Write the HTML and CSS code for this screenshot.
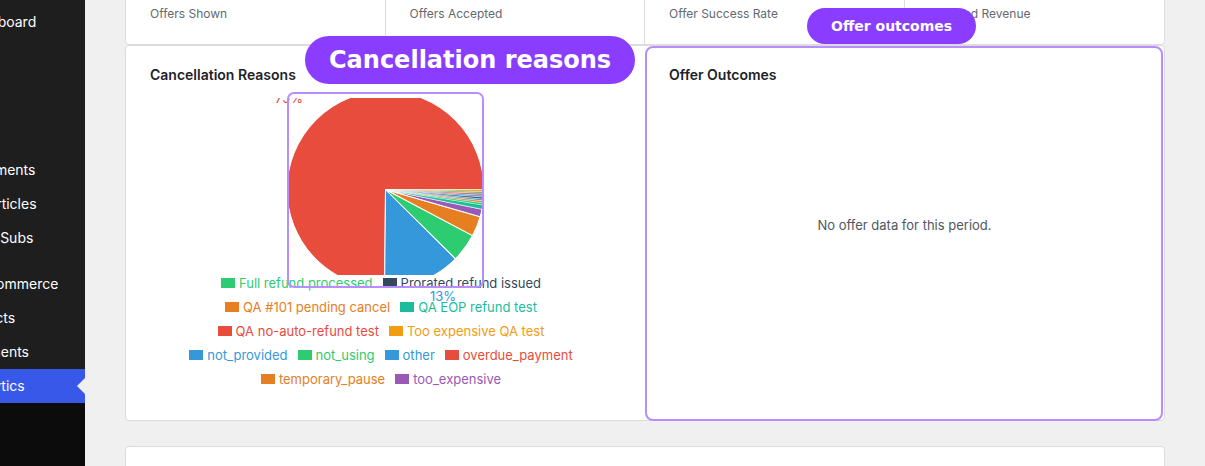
FILE: index.html
```html
<!DOCTYPE html>
<html lang="en">
<head>
  <meta charset="UTF-8" />
  <meta name="viewport" content="width=device-width, initial-scale=1.0"/>
  <title>Retention Analytics</title>
  <link rel="stylesheet" href="styles.css">
</head>
<body>
  <div class="admin">
    <nav class="sidebar">
      <ul class="menu">
        <li>Dashboard</li>
        <li class="sep"></li>
        <li>Pods</li>
        <li>Links</li>
        <li>Tools</li>
        <li>Comments</li>
        <li>KB Articles</li>
        <li>Meal Subs</li>
        <li class="sep"></li>
        <li class="shop">WooCommerce</li>
        <li class="shop">Products</li>
        <li>Payments</li>
        <li class="current">Analytics</li>
      </ul>
    </nav>

    <main class="main">
      <section class="stats">
        <div class="stat">
          <div class="stat-value">0</div>
          <div class="stat-label">Offers Shown</div>
        </div>
        <div class="stat">
          <div class="stat-value">0</div>
          <div class="stat-label">Offers Accepted</div>
        </div>
        <div class="stat">
          <div class="stat-value">0%</div>
          <div class="stat-label">Offer Success Rate</div>
        </div>
        <div class="stat">
          <div class="stat-value">$0.00</div>
          <div class="stat-label">Retained Revenue</div>
        </div>
      </section>

      <section class="charts">
        <div class="panel">
          <h3 class="panel-title">Cancellation Reasons</h3>
          <div class="pie-area">
            <div class="pie-clip">
              <svg class="pie" viewBox="-98 -98 196 196">
                <g stroke="#fff" stroke-width="1" stroke-linejoin="round">
                  <path fill="#e74c3c" d="M0 0 L-0.86 98 A98 98 0 1 1 98 0 Z"/>
                  <path fill="#3498db" d="M0 0 L69.66 68.93 A98 98 0 0 1 -0.86 98 Z"/>
                  <path fill="#2ecc71" d="M0 0 L86.61 45.86 A98 98 0 0 1 69.66 68.93 Z"/>
                  <path fill="#e67e22" d="M0 0 L94.2 27.01 A98 98 0 0 1 86.61 45.86 Z"/>
                  <path fill="#9b59b6" d="M0 0 L96.03 19.54 A98 98 0 0 1 94.2 27.01 Z"/>
                </g>
                <!-- the small slices get a thinner separator so their colour still shows -->
                <g stroke="#fff" stroke-width="0.4" stroke-linejoin="round">
                  <path fill="#1abc9c" d="M0 0 L96.79 15.33 A98 98 0 0 1 96.03 19.54 Z"/>
                  <path fill="#2ecc71" d="M0 0 L97.12 13.13 A98 98 0 0 1 96.79 15.33 Z"/>
                  <path fill="#e67e22" d="M0 0 L97.35 11.26 A98 98 0 0 1 97.12 13.13 Z"/>
                  <path fill="#3498db" d="M0 0 L97.55 9.39 A98 98 0 0 1 97.35 11.26 Z"/>
                  <path fill="#34495e" d="M0 0 L97.71 7.52 A98 98 0 0 1 97.55 9.39 Z"/>
                  <path fill="#3498db" d="M0 0 L97.84 5.64 A98 98 0 0 1 97.71 7.52 Z"/>
                  <path fill="#e74c3c" d="M0 0 L97.93 3.76 A98 98 0 0 1 97.84 5.64 Z"/>
                  <path fill="#1abc9c" d="M0 0 L97.98 1.88 A98 98 0 0 1 97.93 3.76 Z"/>
                  <path fill="#f39c12" d="M0 0 L98 0 A98 98 0 0 1 97.98 1.88 Z"/>
                </g>
              </svg>
              <span class="pie-label pct-big">75%</span>
            </div>

            <div class="legend">
              <div class="legend-row">
                <span class="legend-item c-green"><i class="swatch"></i>Full refund processed</span>
                <span class="legend-item c-navy"><i class="swatch"></i>Prorated refund issued</span>
              </div>
              <div class="legend-row">
                <span class="legend-item c-orange"><i class="swatch"></i>QA #101 pending cancel</span>
                <span class="legend-item c-teal"><i class="swatch"></i>QA EOP refund test</span>
              </div>
              <div class="legend-row">
                <span class="legend-item c-red"><i class="swatch"></i>QA no-auto-refund test</span>
                <span class="legend-item c-amber"><i class="swatch"></i>Too expensive QA test</span>
              </div>
              <div class="legend-row">
                <span class="legend-item c-blue"><i class="swatch"></i>not_provided</span>
                <span class="legend-item c-green"><i class="swatch"></i>not_using</span>
                <span class="legend-item c-blue"><i class="swatch"></i>other</span>
                <span class="legend-item c-red"><i class="swatch"></i>overdue_payment</span>
              </div>
              <div class="legend-row">
                <span class="legend-item c-orange"><i class="swatch"></i>temporary_pause</span>
                <span class="legend-item c-purple"><i class="swatch"></i>too_expensive</span>
              </div>
            </div>

            <span class="pie-label pct-small">13%</span>
            <div class="pie-frame"></div>
          </div>
        </div>

        <div class="panel">
          <h3 class="panel-title">Offer Outcomes</h3>
          <div class="empty">No offer data for this period.</div>
          <div class="panel-focus"></div>
        </div>

        <span class="tag tag-reasons">Cancellation reasons</span>
        <span class="tag tag-outcomes">Offer outcomes</span>
      </section>

      <section class="card-next"></section>
    </main>
  </div>
</body>
</html>
```

FILE: styles.css
```css
body {
  margin: 0;
  height: 466px;
  overflow: hidden;
  background: #f0f0f0;
  font-family: Inter, 'Liberation Sans', sans-serif;
  color: #1d2327;
}

.admin {
  display: flex;
  min-height: 100vh;
}

/* left admin menu, scrolled so the labels run off the edge */
.sidebar {
  width: 85px;
  flex-shrink: 0;
  background: #0c0c0c;
  overflow: hidden;
}

.menu {
  list-style: none;
  margin: 0;
  padding: 5px 0 0;
  background: #1e1e1e;
}

.menu li {
  position: relative;
  height: 34px;
  line-height: 34px;
  font-size: 14px;
  color: #fff;
  white-space: nowrap;
  text-indent: -36px;
}

.menu .shop { text-indent: -44px; }

.menu .sep { height: 12px; }

.menu .current { background: #3858e9; }

.menu .current::after {
  content: "";
  position: absolute;
  right: 0;
  top: 50%;
  margin-top: -8px;
  border: 8px solid transparent;
  border-right-color: #f0f0f0;
}

.main {
  flex: 1;
  padding: 0 40px;
}

/* summary numbers */
.stats {
  margin-top: -51px;
  display: grid;
  grid-template-columns: repeat(4, 1fr);
  background: #fff;
  border: 1px solid #dcdcde;
  border-radius: 4px;
}

.stat {
  padding: 20px 24px 22px;
  border-right: 1px solid #dcdcde;
}

.stat:last-child { border-right: none; }

.stat-value {
  font-size: 24px;
  line-height: 32px;
  font-weight: 600;
}

.stat-label {
  margin-top: 4px;
  font-size: 12px;
  line-height: 16px;
  color: #646970;
}

/* chart row */
.charts {
  position: relative;
  display: grid;
  grid-template-columns: 1fr 1fr;
  background: #fff;
  border: 1px solid #dcdcde;
  border-radius: 4px;
}

.panel {
  position: relative;
  padding: 20px 24px 33px;
}

.panel-title {
  margin: 0;
  font-size: 14px;
  line-height: 18px;
  font-weight: 600;
  color: #1d2327;
}

.pie-area {
  position: relative;
  margin-top: 14px;
}

.pie-clip {
  position: relative;
  height: 177px;
  overflow: hidden;
}

.pie {
  display: block;
  width: 197px;
  height: 197px;
  margin: -7px auto 0;
}

.pie-label {
  position: absolute;
  font-size: 13px;
  line-height: 16px;
}

.pct-big { left: 125px; top: -8px; color: #e74c3c; }
.pct-small { left: 280px; top: 190px; color: #3498db; }

.legend {
  display: flex;
  flex-direction: column;
  gap: 8px;
  padding-right: 9px;
}

.legend-row {
  display: flex;
  justify-content: center;
  gap: 10px;
  height: 16px;
  line-height: 16px;
  font-size: 13px;
  white-space: nowrap;
}

.legend-item {
  display: flex;
  align-items: center;
  gap: 4px;
}

.swatch {
  width: 14px;
  height: 10px;
  background: currentColor;
}

.c-green { color: #2ecc71; }
.c-navy { color: #34495e; }
.c-orange { color: #e67e22; }
.c-teal { color: #1abc9c; }
.c-red { color: #e74c3c; }
.c-amber { color: #f39c12; }
.c-blue { color: #3498db; }
.c-purple { color: #9b59b6; }

.pie-frame {
  position: absolute;
  left: 137px;
  top: -6px;
  width: 197px;
  height: 196px;
  box-sizing: border-box;
  border: 2px solid #b98cff;
  border-radius: 7px;
}

.empty {
  height: 254px;
  margin-top: 14px;
  display: flex;
  align-items: center;
  justify-content: center;
  font-size: 13px;
  color: #50575e;
}

.panel-focus {
  position: absolute;
  top: 0;
  left: 0;
  right: 1px;
  bottom: -1px;
  border: 2px solid #b98cff;
  border-radius: 8px;
}

.tag {
  position: absolute;
  padding: 0 24px;
  border-radius: 999px;
  background: #8b3dff;
  color: #fff;
  font-family: 'DejaVu Sans', sans-serif;
  font-weight: bold;
  white-space: nowrap;
}

.tag-reasons {
  left: 179px;
  top: -10px;
  height: 48px;
  line-height: 49px;
  font-size: 24px;
}

.tag-outcomes {
  left: 681px;
  top: -38px;
  height: 36px;
  line-height: 36px;
  font-size: 14px;
}

.card-next {
  margin-top: 25px;
  height: 200px;
  background: #fff;
  border: 1px solid #dcdcde;
  border-radius: 4px;
}
```
